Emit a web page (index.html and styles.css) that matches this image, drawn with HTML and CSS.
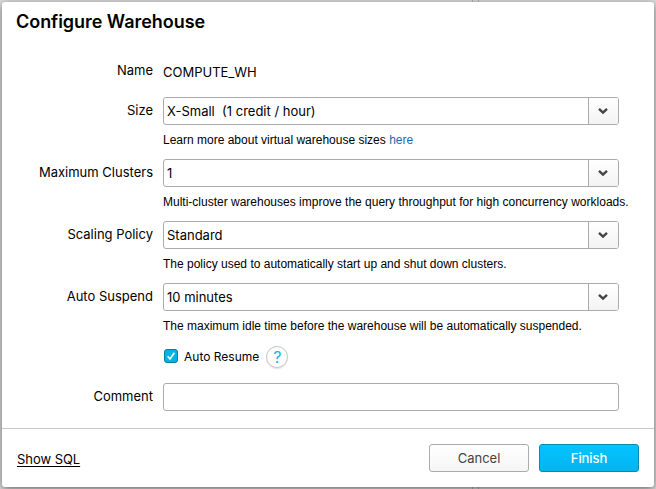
FILE: index.html
```
<!DOCTYPE html>
<html lang="en">
<head>
<meta charset="utf-8">
<title>Configure Warehouse</title>
<link rel="stylesheet" href="styles.css">
</head>
<body>
<div class="dialog">
  <h1 class="title">Configure Warehouse</h1>
  <div class="form">
    <div class="row row-name">
      <div class="label">Name</div>
      <div class="name-value">COMPUTE_WH</div>
    </div>
    <div class="row">
      <div class="label">Size</div>
      <div class="field">
        <div class="select"><span class="value">X-Small&nbsp; (1 credit / hour)</span><span class="arrow"><svg width="12" height="8" viewBox="0 0 12 8"><path d="M2 1.8 6 5.6 10 1.8"/></svg></span></div>
        <p class="help">Learn more about virtual warehouse sizes <a class="link">here</a></p>
      </div>
    </div>
    <div class="row">
      <div class="label">Maximum Clusters</div>
      <div class="field">
        <div class="select"><span class="value">1</span><span class="arrow"><svg width="12" height="8" viewBox="0 0 12 8"><path d="M2 1.8 6 5.6 10 1.8"/></svg></span></div>
        <p class="help">Multi-cluster warehouses improve the query throughput for high concurrency workloads.</p>
      </div>
    </div>
    <div class="row">
      <div class="label">Scaling Policy</div>
      <div class="field">
        <div class="select"><span class="value">Standard</span><span class="arrow"><svg width="12" height="8" viewBox="0 0 12 8"><path d="M2 1.8 6 5.6 10 1.8"/></svg></span></div>
        <p class="help">The policy used to automatically start up and shut down clusters.</p>
      </div>
    </div>
    <div class="row">
      <div class="label">Auto Suspend</div>
      <div class="field">
        <div class="select"><span class="value">10 minutes</span><span class="arrow"><svg width="12" height="8" viewBox="0 0 12 8"><path d="M2 1.8 6 5.6 10 1.8"/></svg></span></div>
        <p class="help">The maximum idle time before the warehouse will be automatically suspended.</p>
      </div>
    </div>
    <div class="resume">
      <span class="checkbox"><svg width="12" height="12" viewBox="0 0 12 12"><path d="M2.6 6.3 5 9 9.4 2.8"/></svg></span>
      <span class="resume-text">Auto Resume</span>
      <span class="question">?</span>
    </div>
    <div class="row">
      <div class="label">Comment</div>
      <div class="input"></div>
    </div>
  </div>
  <div class="footer">
    <a class="sql">Show SQL</a>
    <div class="buttons">
      <div class="button cancel">Cancel</div>
      <div class="button finish">Finish</div>
    </div>
  </div>
</div>
</body>
</html>
```
FILE: styles.css
```
* { box-sizing: border-box; }
html { height: 100%; }
body {
  margin: 0;
  padding: 2px;
  height: 489px;
  overflow: hidden;
  background:
    linear-gradient(#b4b4b4, #b4b4b4) 472px 0 / 1px 100% no-repeat,
    linear-gradient(#b4b4b4, #b4b4b4) 478px 0 / 1px 100% no-repeat,
    #dedede;
  font: 13px/18px Inter, "Liberation Sans", sans-serif;
  color: #000;
}
.dialog {
  display: flex;
  flex-direction: column;
  height: 485px;
  border-radius: 3px;
  background: #fff;
  box-shadow: 0 2px 8px rgba(0, 0, 0, .55);
}
.title {
  margin: 0;
  padding: 8px 14px 0;
  height: 58px;
  font-size: 18px;
  line-height: 23px;
  font-weight: 600;
  letter-spacing: -.04px;
}
.form { height: 368px; }
.row { display: flex; height: 62px; }
.row-name { height: 37px; }
.label {
  width: 151px;
  margin-right: 10px;
  padding-top: 4px;
  text-align: right;
  white-space: nowrap;
}
.row-name .label { padding-top: 1px; }
.name-value { padding-top: 3px; }
.field { width: 480px; }
.select, .input {
  display: flex;
  width: 456px;
  height: 28px;
  border: 1px solid #ababab;
  border-radius: 3px;
  background: #fff;
}
.value { flex: 1; padding: 4px 3px 0; }
.arrow {
  display: flex;
  align-items: center;
  justify-content: center;
  width: 30px;
  padding-right: 1px;
  border-left: 1px solid #ababab;
  border-radius: 0 2px 2px 0;
  background: linear-gradient(#fff, #f3f3f3);
}
.arrow path { fill: none; stroke: #444; stroke-width: 2.4; }
.help {
  margin: 6px 0 0;
  font: 12px/18px "Liberation Sans", Arial, sans-serif;
  white-space: nowrap;
}
.link { color: #1b69b6; }
.resume {
  display: flex;
  align-items: center;
  height: 24px;
  margin: 0 0 14px 162px;
}
.checkbox {
  width: 14px;
  height: 14px;
  margin-top: -2px;
  border: 1px solid #087f9e;
  border-radius: 3px;
  background: #05b4e4;
}
.checkbox svg { display: block; }
.checkbox path { fill: none; stroke: #fff; stroke-width: 1.5; }
.resume-text { margin-left: 6px; font-size: 12px; }
.question {
  width: 22px;
  height: 22px;
  margin-left: 7px;
  border: 1px solid #c4c4c4;
  border-radius: 50%;
  box-shadow: 0 1px 1px rgba(0, 0, 0, .12);
  color: #08b8e8;
  font-size: 16px;
  line-height: 20px;
  text-align: center;
}
.footer {
  display: flex;
  justify-content: space-between;
  height: 59px;
  padding: 15px 15px 0;
  border-top: 1px solid #c8c8c8;
}
.sql {
  padding-top: 6px;
  letter-spacing: -.05px;
  text-decoration: underline;
  text-underline-offset: 2px;
}
.buttons { display: flex; gap: 10px; }
.button {
  width: 100px;
  height: 28px;
  border: 1px solid #ababab;
  border-radius: 3px;
  line-height: 27px;
  text-align: center;
}
.cancel { color: #444; background: linear-gradient(#fff, #f5f5f5); }
.finish {
  border-color: #078bb2;
  background: linear-gradient(#05c3ff, #03b4f0);
  color: #fff;
  font-weight: 500;
  letter-spacing: -.1px;
}
```
